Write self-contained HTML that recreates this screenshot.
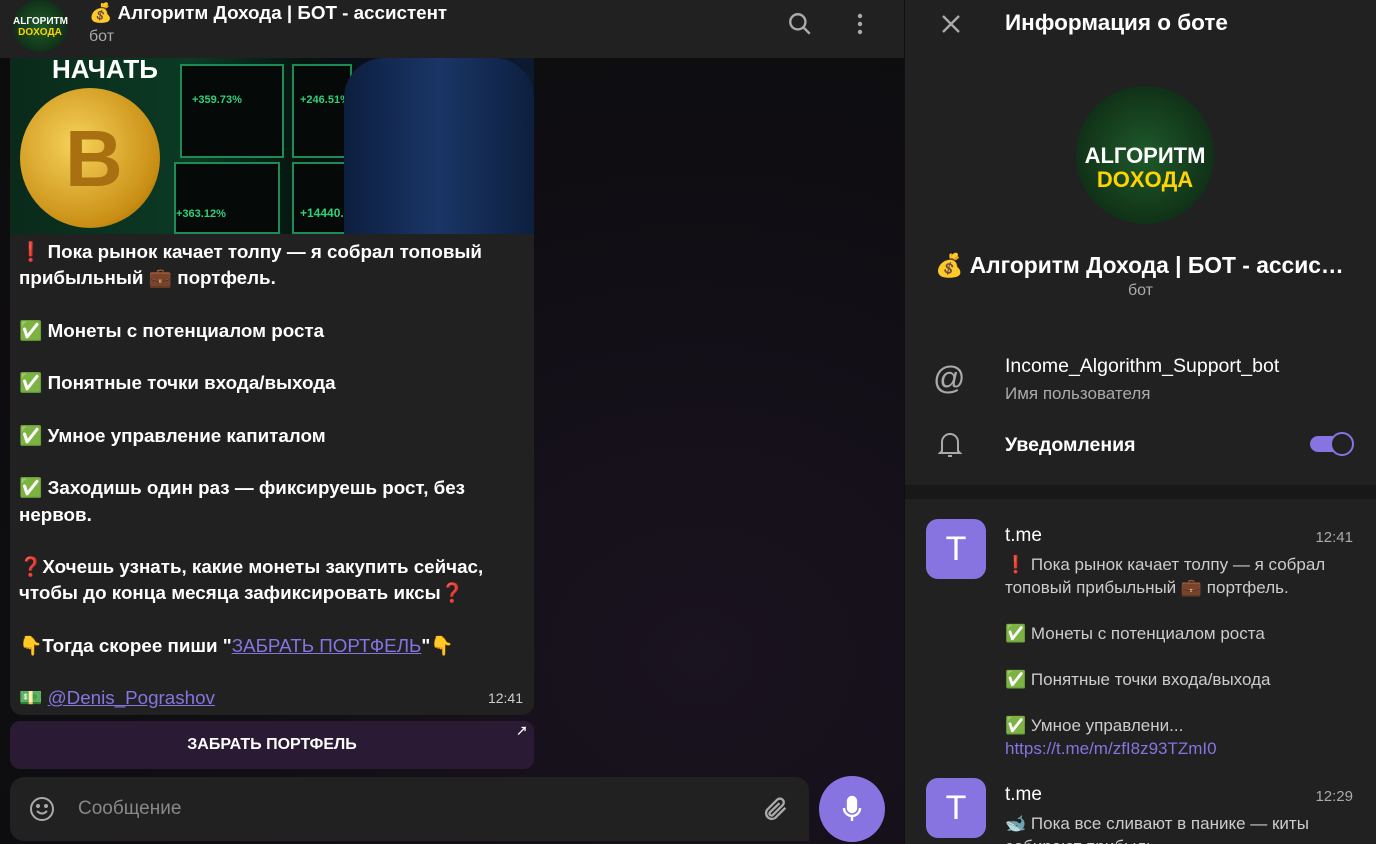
<!DOCTYPE html>
<html><head><meta charset="utf-8"><style>
*{margin:0;padding:0;box-sizing:border-box}
html,body{width:1376px;height:844px;overflow:hidden}
body{background:#0f0f0f;font-family:"Liberation Sans","Noto Sans CJK SC",sans-serif;color:#fff;position:relative}
.abs{position:absolute}
.chatbg{left:0;top:58px;width:904px;height:786px;background:radial-gradient(ellipse at 700px 600px,#1a1320 0%,#0f0d12 60%,#0c0c0c 100%)}
.hdr{left:0;top:0;width:904px;height:58px;background:#212121}
.bubble{left:10px;top:234px;width:524px;height:481px;background:#212121;border-radius:0 0 12px 12px;font-size:18.8px;font-weight:bold;line-height:26.25px;padding:5px 9px}
.bubble p{margin-bottom:26.25px}
a{color:#8774e1}
.bubble a{font-weight:normal;text-decoration:underline}
.e{font-weight:normal}
.panel{left:905px;top:0;width:471px;height:844px;background:#212121;overflow:hidden}
.sep{left:905px;top:485px;width:471px;height:14px;background:#181818}
</style></head><body>
<div class="abs chatbg"></div>
<div class="abs" style="left:10px;top:58px;width:524px;height:176px;overflow:hidden;background:linear-gradient(90deg,#0a2a1a 0%,#0b3a25 35%,#061510 55%,#0a0f1a 70%,#0c1a30 100%)">
 <div class="abs" style="left:10px;top:30px;width:140px;height:140px;border-radius:50%;background:radial-gradient(circle at 40% 40%,#f6d25a,#c98e14 70%,#7a5208)"></div>
 <div class="abs" style="left:55px;top:55px;font-size:80px;color:#a87010;font-weight:bold">B</div>
 <div class="abs" style="left:42px;top:-4px;font-size:26px;font-weight:bold">НАЧАТЬ</div>
 <div class="abs" style="left:170px;top:6px;width:104px;height:94px;border:2px solid #1e8a55;background:#050a08"></div>
 <div class="abs" style="left:282px;top:6px;width:60px;height:94px;border:2px solid #1e8a55;background:#050a08"></div>
 <div class="abs" style="left:164px;top:104px;width:106px;height:72px;border:2px solid #1e8a55;background:#050a08"></div>
 <div class="abs" style="left:282px;top:104px;width:60px;height:72px;border:2px solid #1e8a55;background:#050a08"></div>
 <div class="abs" style="left:182px;top:36px;font-size:11px;color:#2fd07a;font-weight:bold">+359.73%</div>
 <div class="abs" style="left:290px;top:36px;font-size:11px;color:#2fd07a;font-weight:bold">+246.51%</div>
 <div class="abs" style="left:166px;top:150px;font-size:11px;color:#2fd07a;font-weight:bold">+363.12%</div>
 <div class="abs" style="left:290px;top:148px;font-size:12px;color:#2fd07a;font-weight:bold">+14440.59</div>
 <div class="abs" style="left:334px;top:0;width:190px;height:176px;background:linear-gradient(90deg,#0d1f3f,#1a3566 50%,#0d1f3f);border-radius:40px 40px 0 0"></div>
</div>
<div class="abs bubble">
<p>❗ Пока рынок качает толпу — я собрал топовый прибыльный 💼 портфель.</p>
<p>✅ Монеты с потенциалом роста</p>
<p>✅ Понятные точки входа/выхода</p>
<p>✅ Умное управление капиталом</p>
<p>✅ Заходишь один раз — фиксируешь рост, без нервов.</p>
<p>❓Хочешь узнать, какие монеты закупить сейчас, чтобы до конца месяца зафиксировать иксы❓</p>
<p>👇Тогда скорее пиши "<a>ЗАБРАТЬ ПОРТФЕЛЬ</a>"👇</p>
<p style="margin:0">💵 <a>@Denis_Pograshov</a></p>
<span class="abs e" style="right:11px;bottom:4px;font-size:14px;color:#ccc">12:41</span>
</div>
<div class="abs" style="left:10px;top:721px;width:524px;height:48px;background:#2a1a33;border-radius:10px;font-size:16px;font-weight:bold;text-align:center;line-height:48px">ЗАБРАТЬ ПОРТФЕЛЬ<span class="abs" style="right:6px;top:-14px;font-size:12px">↗</span></div>
<div class="abs" style="left:10px;top:777px;width:799px;height:64px;background:#212121;border-radius:14px 14px 0 14px">
 <svg class="abs" style="left:18px;top:18px" width="28" height="28" viewBox="0 0 28 28" fill="none" stroke="#aaa" stroke-width="2"><circle cx="14" cy="14" r="11"/><circle cx="10" cy="11" r="1" fill="#aaa"/><circle cx="18" cy="11" r="1" fill="#aaa"/><path d="M9 16q5 5 10 0"/></svg>
 <span class="abs" style="left:68px;top:21px;font-size:19px;color:#888">Сообщение</span>
 <svg class="abs" style="left:752px;top:18px" width="28" height="28" viewBox="0 0 24 24" fill="none" stroke="#aaa" stroke-width="2"><path d="M20 11l-8.5 8.5a5 5 0 01-7-7L13 4a3.3 3.3 0 014.7 4.7l-8.5 8.5a1.7 1.7 0 01-2.4-2.4L15 7"/></svg>
</div>
<div class="abs" style="left:819px;top:776px;width:66px;height:66px;border-radius:50%;background:#8774e1">
 <svg class="abs" style="left:21px;top:19px" width="24" height="28" viewBox="0 0 24 28" fill="none" stroke="#fff" stroke-width="2.4"><rect x="8" y="2" width="8" height="15" rx="4" fill="#fff"/><path d="M4 13a8 8 0 0016 0M12 21v5"/></svg>
</div>
<div class="abs hdr">
 <div class="abs" style="left:13px;top:0;width:54px;height:52px;border-radius:50%;background:radial-gradient(circle,#1f5a2a,#0a2010);font-size:10px;font-weight:bold;text-align:center;padding-top:16px;line-height:11px;color:#fff">ALГОРИТМ<br><span style="color:#ffd400">DOXOДА</span></div>
 <div class="abs" style="left:89px;top:2px;font-size:18.8px;font-weight:bold">💰 Алгоритм Дохода | БОТ - ассистент</div>
 <div class="abs" style="left:89px;top:28px;font-size:16px;color:#aaa">бот</div>
 <svg class="abs" style="left:787px;top:11px" width="26" height="26" viewBox="0 0 24 24" fill="none" stroke="#aaa" stroke-width="2.2"><circle cx="10" cy="10" r="7"/><path d="M15 15l6 6"/></svg>
 <svg class="abs" style="left:850px;top:12px" width="20" height="24" viewBox="0 0 20 24" fill="#aaa"><circle cx="10" cy="4" r="2.2"/><circle cx="10" cy="12" r="2.2"/><circle cx="10" cy="20" r="2.2"/></svg>
</div>
<div class="abs panel">
 <svg class="abs" style="left:35px;top:13px" width="22" height="22" viewBox="0 0 22 22" stroke="#aaa" stroke-width="2.4"><path d="M3 3l16 16M19 3L3 19"/></svg>
 <div class="abs" style="left:100px;top:10px;font-size:22.5px;font-weight:bold">Информация о боте</div>
 <div class="abs" style="left:171px;top:86px;width:138px;height:138px;border-radius:50%;background:radial-gradient(circle,#1f5a2a,#0a2010);font-size:22px;font-weight:bold;text-align:center;padding-top:58px;line-height:24px">ALГОРИТМ<br><span style="color:#ffd400">DOXOДА</span></div>
 <div class="abs" style="left:30px;top:252px;font-size:22.8px;font-weight:bold;white-space:nowrap">💰 Алгоритм Дохода | БОТ - ассис…</div>
 <div class="abs" style="left:0;width:471px;top:282px;font-size:16px;color:#aaa;text-align:center">бот</div>
 <div class="abs" style="left:28px;top:360px;font-size:32px;color:#aaa">@</div>
 <div class="abs" style="left:100px;top:355px;font-size:19.5px">Income_Algorithm_Support_bot</div>
 <div class="abs" style="left:100px;top:384px;font-size:17px;color:#aaa">Имя пользователя</div>
 <svg class="abs" style="left:32px;top:429px" width="26" height="30" viewBox="0 0 26 30" fill="none" stroke="#aaa" stroke-width="2"><path d="M5 22V13a8 8 0 0116 0v9l2 2H3z"/><path d="M11 27h4"/></svg>
 <div class="abs" style="left:100px;top:434px;font-size:19.5px;font-weight:bold">Уведомления</div>
 <div class="abs" style="left:405px;top:436px;width:40px;height:16px;border-radius:8px;background:#8774e1"></div>
 <div class="abs" style="left:425px;top:432px;width:24px;height:24px;border-radius:50%;background:#212121;border:2.5px solid #8774e1"></div>
 <div class="abs" style="left:21px;top:519px;width:60px;height:60px;border-radius:12px;background:#8774e1;font-size:34px;text-align:center;line-height:60px">T</div>
 <div class="abs" style="left:100px;top:525px;font-size:19px">t.me</div>
 <div class="abs" style="right:23px;top:529px;font-size:15px;color:#aaa">12:41</div>
 <div class="abs" style="left:100px;top:553px;width:350px;font-size:17px;line-height:23px;color:#ccc">❗ Пока рынок качает толпу — я собрал топовый прибыльный 💼 портфель.<br><br>✅ Монеты с потенциалом роста<br><br>✅ Понятные точки входа/выхода<br><br>✅ Умное управлени...<br><a>https://t.me/m/zfI8z93TZmI0</a></div>
 <div class="abs" style="left:21px;top:778px;width:60px;height:60px;border-radius:12px;background:#8774e1;font-size:34px;text-align:center;line-height:60px">T</div>
 <div class="abs" style="left:100px;top:784px;font-size:19px">t.me</div>
 <div class="abs" style="right:23px;top:788px;font-size:15px;color:#aaa">12:29</div>
 <div class="abs" style="left:100px;top:812px;width:350px;font-size:17px;line-height:23px;color:#ccc">🐋 Пока все сливают в панике — киты собирают прибыль</div>
</div>
<div class="abs sep"></div>
<div class="abs" style="left:904px;top:0;width:1px;height:844px;background:#0f0f0f"></div>
</body></html>
